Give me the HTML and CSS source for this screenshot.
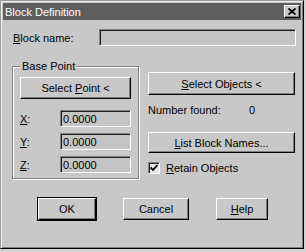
FILE: index.html
```html
<!DOCTYPE html>
<html lang="en">
<head>
    <meta charset="UTF-8">
    <title>Block Definition</title>
    <link rel="stylesheet" href="styles.css">
</head>
<body>
    <div class="dialog">
        <div class="titlebar">
            <span class="title">Block Definition</span>
            <span class="close-btn">
                <svg width="8" height="7" viewBox="0 0 8 7">
                    <path d="M0.5 0.5 L7.5 6.5 M7.5 0.5 L0.5 6.5" stroke="#000" stroke-width="1.8" fill="none"/>
                </svg>
            </span>
        </div>

        <div class="name-row">
            <label class="name-label"><u>B</u>lock name:</label>
            <div class="field name-field"></div>
        </div>

        <div class="middle">
            <div class="group">
                <span class="legend">Base Point</span>
                <div class="btn point-btn"><span>Select <u>P</u>oint &lt;</span></div>
                <div class="coord-row first">
                    <span class="coord-label"><u>X</u>:</span>
                    <div class="field coord-field">0.0000</div>
                </div>
                <div class="coord-row">
                    <span class="coord-label"><u>Y</u>:</span>
                    <div class="field coord-field">0.0000</div>
                </div>
                <div class="coord-row">
                    <span class="coord-label"><u>Z</u>:</span>
                    <div class="field coord-field">0.0000</div>
                </div>
            </div>

            <div class="right-col">
                <div class="btn objects-btn"><span><u>S</u>elect Objects &lt;</span></div>
                <div class="found-row">
                    <span class="found-label">Number found:</span>
                    <span>0</span>
                </div>
                <div class="btn list-btn"><span><u>L</u>ist Block Names...</span></div>
                <div class="check-row">
                    <span class="checkbox">
                        <svg width="8" height="8" viewBox="0 0 8 8">
                            <path d="M0.5 3.5 L3 6 L7.5 1" stroke="#000" stroke-width="1.8" fill="none"/>
                        </svg>
                    </span>
                    <span><u>R</u>etain Objects</span>
                </div>
            </div>
        </div>

        <div class="buttons">
            <div class="btn default-btn ok-btn">OK</div>
            <div class="btn cancel-btn">Cancel</div>
            <div class="btn help-btn"><span><u>H</u>elp</span></div>
        </div>
    </div>
</body>
</html>
```

FILE: styles.css
```css
body {
    margin: 0;
    background-color: #d2d2d2;
    font-family: "Liberation Sans", Arial, sans-serif;
    font-size: 11px;
    color: #000;
}
.dialog {
    width: 304px;
    height: 249px;
    box-sizing: border-box;
    padding: 2px;
    background-color: #c8c8c8;
    border: 1px solid;
    border-color: #9c9c9c #000 #000 #9c9c9c;
    box-shadow: inset 1px 1px 0 #f0f0f0, inset -1px -1px 0 #808080;
}
.titlebar {
    height: 17px;
    display: flex;
    align-items: center;
    justify-content: space-between;
    padding: 0 1px 0 2px;
    background-color: #5e5e5e;
    color: #fff;
}
.close-btn {
    width: 16px;
    height: 13px;
    box-sizing: border-box;
    display: flex;
    align-items: center;
    justify-content: center;
    background-color: #c8c8c8;
    border: 1px solid;
    border-color: #fff #000 #000 #fff;
    box-shadow: inset -1px -1px 0 #808080;
}

/* campos afundados */
.field {
    height: 17px;
    box-sizing: border-box;
    border: 1px solid;
    border-color: #808080 #fff #fff #808080;
    box-shadow: inset 1px 1px 0 #202020;
    background-color: #c4c4c4;
    padding: 2px 0 0 2px;
    line-height: 13px;
}

.btn {
    box-sizing: border-box;
    display: flex;
    align-items: center;
    justify-content: center;
    background-color: #c8c8c8;
    border: 1px solid;
    border-color: #fff #000 #000 #fff;
    box-shadow: inset -1px -1px 0 #808080;
}
.default-btn {
    outline: 1px solid #000;
    outline-offset: 0;
}

.name-row {
    display: flex;
    align-items: center;
    margin-top: 9px;
    padding-left: 10px;
}
.name-label {
    width: 86px;
}
.name-field {
    width: 197px;
}

.middle {
    display: flex;
    align-items: flex-start;
    margin-top: 20px;
}
.group {
    position: relative;
    width: 127px;
    height: 113px;
    box-sizing: border-box;
    margin-left: 9px;
    padding: 10px 0 0 7px;
    border: 1px solid #808080;
    box-shadow: 1px 1px 0 #fff, inset 1px 1px 0 #fff;
}
.legend {
    position: absolute;
    top: -7px;
    left: 7px;
    padding: 0 2px;
    background-color: #c8c8c8;
    line-height: 13px;
}
.point-btn {
    width: 111px;
    height: 22px;
}
.coord-row {
    display: flex;
    align-items: center;
    margin-top: 6px;
}
.coord-row.first {
    margin-top: 11px;
}
.coord-label {
    width: 40px;
}
.coord-field {
    width: 71px;
}

.right-col {
    width: 147px;
    margin: 6px 0 0 9px;
}
.objects-btn {
    height: 23px;
}
.found-row {
    display: flex;
    height: 14px;
    align-items: center;
    margin-top: 8px;
}
.found-label {
    width: 101px;
}
.list-btn {
    height: 21px;
    margin-top: 15px;
}
.check-row {
    display: flex;
    align-items: center;
    gap: 6px;
    margin-top: 9px;
    height: 12px;
}
.checkbox {
    width: 12px;
    height: 12px;
    box-sizing: border-box;
    display: flex;
    align-items: center;
    justify-content: center;
    border: 1px solid;
    border-color: #808080 #fff #fff #808080;
    box-shadow: inset 1px 1px 0 #202020;
    background-color: #e8e8e8;
}

.buttons {
    display: flex;
    margin-top: 19px;
    padding-left: 35px;
}
.ok-btn {
    width: 58px;
    height: 22px;
}
.cancel-btn {
    width: 66px;
    height: 22px;
    margin-left: 27px;
}
.help-btn {
    width: 52px;
    height: 22px;
    margin-left: 27px;
}
```
